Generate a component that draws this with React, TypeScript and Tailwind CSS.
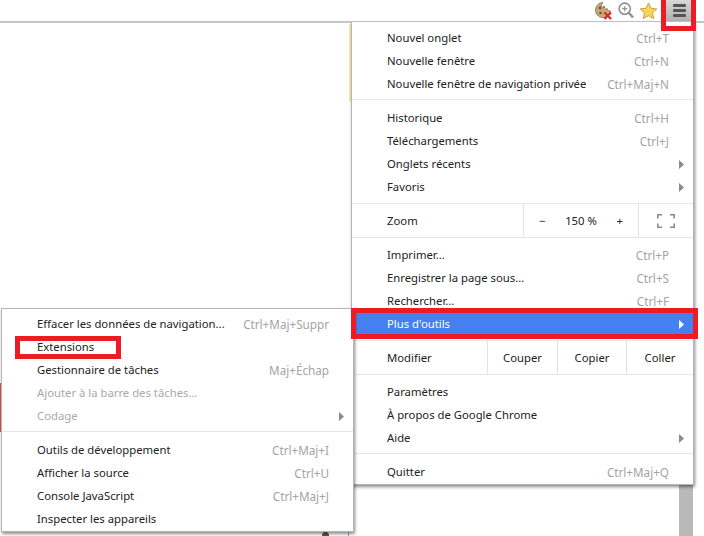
import type { ReactNode } from 'react';

const font = { fontFamily: '"Noto Sans", "Open Sans", sans-serif' };

function Arrow({ light }: { light?: boolean }) {
  return (
    <svg width="5" height="9" viewBox="0 0 5 9" className="absolute right-[9px] top-[7px]">
      <path d="M0 0 L5 4.5 L0 9 Z" fill={light ? '#ffffff' : '#8a8a8a'} />
    </svg>
  );
}

function Item({ label, keys, arrow, disabled, active, pad = 35, right = 24 }: {
  label: string; keys?: string; arrow?: boolean; disabled?: boolean; active?: boolean; pad?: number; right?: number;
}) {
  return (
    <div
      className={`relative flex h-[23px] items-center justify-between ${active ? 'bg-[#4580f0] text-white' : disabled ? 'text-[#a9a9a9]' : 'text-[#222222]'}`}
      style={{ paddingLeft: pad, paddingRight: right }}
    >
      <span className="whitespace-nowrap">{label}</span>
      {keys && <span className="whitespace-nowrap text-[11.7px] text-[#a3a3a3]">{keys}</span>}
      {arrow && <Arrow light={active} />}
    </div>
  );
}

function Sep({ className = '' }: { className?: string }) {
  return <div className={`h-px bg-[#e6e6e6] ${className}`} />;
}

function Cell({ children, className = '' }: { children: ReactNode; className?: string }) {
  return <div className={`flex items-center justify-center border-l border-[#e3e3e3] ${className}`}>{children}</div>;
}

function ToolbarIcons() {
  return (
    <div className="flex h-[23px] items-center justify-end border-b-2 border-[#c4c4c4]">
      <svg width="18" height="18" viewBox="0 0 18 18">
        <path d="M8 0.6 A7.5 7.5 0 1 0 15.4 9 A3 3 0 0 1 12 6.5 A3 3 0 0 1 8 0.6 Z" fill="#c9a877" stroke="#94805f" />
        <circle cx="5" cy="6" r="1.4" fill="#6e5535" />
        <circle cx="9" cy="5" r="1" fill="#6e5535" />
        <circle cx="5.5" cy="11" r="1.3" fill="#6e5535" />
        <path d="M9.5 10.5 L16 17 M16 10.5 L9.5 17" stroke="#d8262b" strokeWidth="2.2" />
      </svg>
      <svg width="16" height="17" viewBox="0 0 16 17" className="ml-[5px]">
        <circle cx="6.7" cy="6.7" r="5.6" fill="none" stroke="#8f8f8f" strokeWidth="1.6" />
        <path d="M10.8 10.8 L15 15.5" stroke="#8f8f8f" strokeWidth="2.4" />
        <path d="M4.2 6.7 H9.2 M6.7 4.2 V9.2" stroke="#8f8f8f" strokeWidth="1.2" />
      </svg>
      <svg width="19" height="18" viewBox="0 0 20 19" className="ml-[5px]">
        <path d="M10 1 L12.6 6.6 L18.8 7.3 L14.2 11.4 L15.5 17.5 L10 14.4 L4.5 17.5 L5.8 11.4 L1.2 7.3 L7.4 6.6 Z" fill="#f7d45c" stroke="#c89a3a" strokeWidth="1" />
      </svg>
      <div className="ml-[8px] mr-[12px] flex h-[21px] w-[26px] flex-col items-center justify-center gap-[2px] bg-gradient-to-b from-[#d8d8d8] to-[#b0b0b0]">
        <div className="h-[3px] w-[13px] rounded-[1px] bg-[#555555]" />
        <div className="h-[3px] w-[13px] rounded-[1px] bg-[#555555]" />
        <div className="h-[3px] w-[13px] rounded-[1px] bg-[#555555]" />
      </div>
    </div>
  );
}

function MainMenu() {
  return (
    <div className="absolute left-[351px] top-[22px] h-[463px] w-[343px] border border-t-0 border-[#b5b5b5] bg-white pt-[5px] shadow-[1px_2px_3px_rgba(0,0,0,0.45)]">
      <Item label="Nouvel onglet" keys="Ctrl+T" />
      <Item label="Nouvelle fenêtre" keys="Ctrl+N" />
      <Item label="Nouvelle fenêtre de navigation privée" keys="Ctrl+Maj+N" />
      <Sep className="mt-[3px] mb-[7px]" />
      <Item label="Historique" keys="Ctrl+H" />
      <Item label="Téléchargements" keys="Ctrl+J" />
      <Item label="Onglets récents" arrow />
      <Item label="Favoris" arrow />
      <Sep className="mt-[4px]" />
      <div className="flex h-[33px] text-[#222222]">
        <div className="flex w-[171px] items-center pl-[35px] pt-[2px]">Zoom</div>
        <Cell className="w-[115px] pt-[2px]">
          <div className="flex w-full justify-between px-[15px]">
            <span>−</span><span>150 %</span><span>+</span>
          </div>
        </Cell>
        <Cell className="flex-1">
          <svg width="18" height="14" viewBox="0 0 18 14">
            <path d="M0.8 4.5 V0.8 H5 M13 0.8 H17.2 V4.5 M17.2 9.5 V13.2 H13 M5 13.2 H0.8 V9.5" fill="none" stroke="#8a8a8a" strokeWidth="1.6" />
          </svg>
        </Cell>
      </div>
      <Sep className="mb-[6px]" />
      <Item label="Imprimer..." keys="Ctrl+P" />
      <Item label="Enregistrer la page sous..." keys="Ctrl+S" />
      <Item label="Rechercher..." keys="Ctrl+F" />
      <Item label="Plus d'outils" arrow active />
      <div className="h-[4px]" />
      <Sep />
      <div className="flex h-[33px] text-[#222222]">
        <div className="flex w-[135px] items-center pl-[35px] pt-[2px]">Modifier</div>
        <Cell className="w-[70px] pt-[2px]">Couper</Cell>
        <Cell className="w-[69px] pt-[2px]">Copier</Cell>
        <Cell className="flex-1 pt-[2px]">Coller</Cell>
      </div>
      <Sep className="mb-[6px]" />
      <Item label="Paramètres" />
      <Item label="À propos de Google Chrome" />
      <Item label="Aide" arrow />
      <Sep className="mt-[3px] mb-[7px]" />
      <Item label="Quitter" keys="Ctrl+Maj+Q" />
    </div>
  );
}

function SubMenu() {
  return (
    <div className="absolute left-[1px] top-[308px] h-[224px] w-[353px] border border-[#b5b5b5] bg-white pt-[4px] shadow-[1px_2px_3px_rgba(0,0,0,0.45)]">
      <Item label="Effacer les données de navigation..." keys="Ctrl+Maj+Suppr" />
      <Item label="Extensions" />
      <Item label="Gestionnaire de tâches" keys="Maj+Échap" />
      <Item label="Ajouter à la barre des tâches..." disabled />
      <Item label="Codage" disabled arrow />
      <Sep className="mt-[3px] mb-[7px]" />
      <Item label="Outils de développement" keys="Ctrl+Maj+I" />
      <Item label="Afficher la source" keys="Ctrl+U" />
      <Item label="Console JavaScript" keys="Ctrl+Maj+J" />
      <Item label="Inspecter les appareils" />
    </div>
  );
}

export default function App() {
  return (
    <div className="relative h-[536px] w-[704px] overflow-hidden bg-white text-[11.3px]" style={font}>
      <ToolbarIcons />

      {/* bits of the page behind the menus */}
      <div className="absolute left-[349px] top-[24px] h-[78px] w-[2px] bg-[#fbe9a8]" />
      <div className="absolute left-0 top-[383px] h-[49px] w-px bg-[#e5533d]" />
      <div className="absolute left-[679px] top-[485px] h-[51px] w-[14px] bg-[#b9b9b9]" />
      <div className="absolute left-[322px] top-[532px] h-[4px] w-[7px] rounded-t-full bg-[#555555]" />
      <div className="absolute left-[348px] top-[531px] h-[5px] w-px bg-[#7fa7e8]" />

      <MainMenu />
      <SubMenu />

      {/* red annotations */}
      <div className="absolute left-[661px] top-[-6px] h-[37px] w-[35px] border-[5px] border-[#ed1c24]" />
      <div className="absolute left-[351px] top-[308px] h-[31px] w-[347px] border-[5px] border-[#ed1c24]" />
      <div className="absolute left-[15px] top-[336px] h-[23px] w-[106px] border-[5px] border-[#ed1c24]" />
    </div>
  );
}
